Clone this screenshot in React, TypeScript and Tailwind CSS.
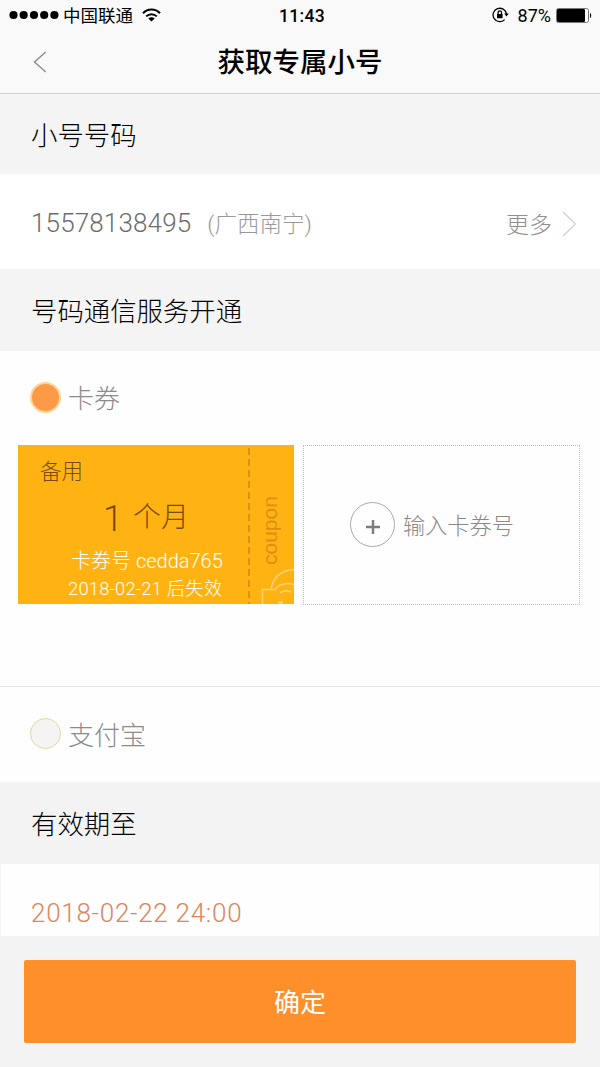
import React, { useState } from 'react';

type PayMethod = 'coupon' | 'alipay';

const coupon = {
  label: '备用',
  amount: '1',
  unit: '个月',
  code: 'cedda765',
  expires: '2018-02-21',
};

function StatusBar() {
  return (
    <div className="h-[30px] flex items-center justify-between pl-[9px] pr-[8px] text-black">
      <div className="w-[240px] flex items-center">
        <svg width="50" height="10" viewBox="0 0 50 10" fill="currentColor">
          {[4.5, 14.7, 25, 35.2, 45.4].map((cx) => (
            <circle key={cx} cx={cx} cy="5" r="4.1" />
          ))}
        </svg>
        <span className="ml-[4px] pt-[2px] text-[17.5px] leading-[30px]">中国联通</span>
        <svg className="ml-[9px]" width="19" height="14" viewBox="0 0 19 14" fill="none" stroke="currentColor" strokeWidth="2">
          <path d="M1 5.2C5.6.2 13.4.2 18 5.2" />
          <path d="M4.2 8.4c3-3 7.6-3 10.6 0" />
          <path d="M9.5 13.4 6.3 10.4c1.8-1.6 4.6-1.6 6.4 0z" fill="currentColor" stroke="none" />
        </svg>
      </div>
      <span className="pl-[3px] pt-[2px] font-['Roboto'] text-[17.5px] font-medium tracking-[0.3px]">11:43</span>
      <div className="w-[240px] flex items-center justify-end">
        <svg width="17" height="16" viewBox="0 0 17 16" fill="none" stroke="currentColor" strokeWidth="1.3">
          <path d="M12.6 12.6A6.7 6.7 0 1 1 14.4 7" />
          <path d="M12.2 6.6h4.6l-2.3 3z" fill="currentColor" stroke="none" />
          <rect x="5" y="7" width="5.6" height="4.2" fill="currentColor" stroke="none" />
          <path d="M6.1 7.2V5.6a1.7 1.7 0 0 1 3.4 0v1.6" />
        </svg>
        <span className="ml-[9px] font-['Roboto'] text-[18px]">87%</span>
        <svg className="ml-[5px]" width="36" height="15" viewBox="0 0 36 15">
          <rect x="0.5" y="0.5" width="32" height="14" rx="2" fill="#fff" stroke="#777" />
          <rect x="1" y="1" width="28" height="13" rx="1.2" fill="#000" />
          <path d="M34 5c1.6.6 1.6 4.4 0 5z" fill="#000" />
        </svg>
      </div>
    </div>
  );
}

function SectionTitle({ children }: { children: React.ReactNode }) {
  return (
    <h2 className="w-full h-full flex items-center pl-[31px] pt-[5px] text-[26.4px] font-light text-black">{children}</h2>
  );
}

function Radio({ checked }: { checked: boolean }) {
  return (
    <span
      className={`w-[31px] h-[31px] rounded-full shrink-0 ${
        checked ? 'bg-[#fd9a48] border-2 border-[#fbd59a]' : 'bg-[#f5f3f4] border border-[#e3da95]'
      }`}
    />
  );
}

export default function App() {
  const [method, setMethod] = useState<PayMethod>('coupon');

  return (
    <div className="w-[600px] h-[1067px] flex flex-col overflow-hidden bg-[#f4f3f4] font-['Roboto','Noto_Sans_CJK_SC',sans-serif]">
      {/* Top bar */}
      <header className="h-[94px] shrink-0 bg-[#f9f9f9] border-b border-[#cfcfcf]">
        <StatusBar />
        <div className="h-[63px] grid grid-cols-[60px_1fr_60px] items-center">
          <button className="pl-[33px] cursor-pointer">
            <svg width="14" height="22" viewBox="0 0 14 22" fill="none" stroke="#8b8b8b" strokeWidth="1.4">
              <path d="M12.7 1 1.5 11l11.2 10" />
            </svg>
          </button>
          <h1 className="pt-[3px] text-center text-[27.5px] leading-[40px] font-medium text-black">获取专属小号</h1>
        </div>
      </header>

      <div className="h-[80px] shrink-0 bg-[#f4f4f4]">
        <SectionTitle>小号号码</SectionTitle>
      </div>
      <div className="h-[95px] shrink-0 bg-white flex items-center pl-[31px] pr-[23px] pt-[4px]">
        <span className="text-[26px] font-light tracking-[0.15px] text-[#6c6c6c]">15578138495</span>
        <span className="ml-[16px] pt-[3px] text-[22.5px] font-light text-[#999]">(广西南宁)</span>
        <button className="ml-auto flex items-center text-[23px] font-light text-[#8f8f8f] cursor-pointer">
          <span className="pt-[5px]">更多</span>
          <svg className="ml-[10px]" width="15" height="26" viewBox="0 0 15 26" fill="none" stroke="#cfcfcf" strokeWidth="1.2">
            <path d="m1 1 12.5 12L1 25" />
          </svg>
        </button>
      </div>

      <div className="h-[82px] shrink-0 bg-[#f4f4f4]">
        <SectionTitle>号码通信服务开通</SectionTitle>
      </div>

      {/* Payment methods */}
      <div className="h-[336px] shrink-0 bg-[#fefefe] border-b border-[#e6e6e6]">
        <button onClick={() => setMethod('coupon')} className="h-[94px] pl-[30px] pb-[2px] flex items-center gap-[7px] cursor-pointer">
          <Radio checked={method === 'coupon'} />
          <span className="pt-[5px] text-[26px] font-light text-[#8b8b8b]">卡券</span>
        </button>
        <div className="flex gap-[9px] pl-[18px]">
          <div className="relative w-[276px] h-[159px] overflow-hidden bg-[#ffb313] flex">
            <div className="w-[230px] pt-[12px]">
              <p className="pl-[22px] text-[21.5px] leading-[30px] font-light text-[#7a4a0c]">{coupon.label}</p>
              <p className="mt-[13px] pl-[85px] flex items-center gap-[11px] leading-[34px] font-light text-[#7a4a0c]">
                <span className="w-[19px] pt-[2px] text-[36px]">{coupon.amount}</span>
                <span className="text-[28px]">{coupon.unit}</span>
              </p>
              <p className="mt-[11px] pl-[53px] text-[20px] leading-[28px] font-light text-white whitespace-nowrap">卡券号 {coupon.code}</p>
              <p className="pl-[50px] text-[18.3px] leading-[28px] font-light tracking-[0.25px] text-white whitespace-nowrap">{coupon.expires} 后失效</p>
            </div>
            <svg width="2" height="159" viewBox="0 0 2 159" stroke="#d08c16" strokeWidth="1.6">
              <path d="M1 3v156" strokeDasharray="7 4" />
            </svg>
            <div className="flex-1 pt-[48px]">
              <span className="block w-[40px] h-[72px] [writing-mode:vertical-rl] rotate-180 font-['Liberation_Sans'] text-[21px] leading-[40px] text-[#dc8f14]">coupon</span>
            </div>
            <svg className="absolute right-0 bottom-0" width="34" height="38" viewBox="0 0 34 38" fill="none" stroke="#ffd175" strokeWidth="1.6">
              <path d="M2.5 38V23.5h13M11 23C13 11 22 4 34 3.5M15.5 23.5c3-6 12-7 18.5-5M20 27c4-3 7-3 11-1" />
              <path d="M18 36.5h5" strokeWidth="2.5" />
            </svg>
          </div>
          <button className="w-[277px] h-[160px] border border-dotted border-[#c0c0c0] flex items-center pl-[46px] pb-[2px] cursor-pointer">
            <span className="w-[45px] h-[45px] rounded-full border border-[#aaa] flex items-center justify-center">
              <svg className="mt-[6px]" width="14" height="14" viewBox="0 0 14 14" stroke="#7c7c7c" strokeWidth="2.4">
                <path d="M7 0v14M0 7h14" />
              </svg>
            </span>
            <span className="ml-[8px] pt-[5px] text-[22.2px] font-light text-[#888]">输入卡券号</span>
          </button>
        </div>
      </div>
      <button onClick={() => setMethod('alipay')} className="h-[95px] shrink-0 bg-[#fefefe] pl-[30px] pb-[2px] flex items-center gap-[7px] cursor-pointer">
        <Radio checked={method === 'alipay'} />
        <span className="pt-[5px] text-[26px] font-light text-[#8b8b8b]">支付宝</span>
      </button>

      <div className="h-[82px] shrink-0">
        <SectionTitle>有效期至</SectionTitle>
      </div>
      <div className="h-[72px] shrink-0 mx-[1px] bg-[#fefefe] pl-[30px] pt-[30px] text-[26px] leading-[38px] font-light tracking-[0.72px] text-[#e0835a]">
        2018-02-22 24:00
      </div>

      {/* Bottom action */}
      <footer className="h-[131px] shrink-0 px-[24px] pt-[24px]">
        <button className="w-full h-[83px] rounded-[2px] bg-[#ff8f2b] pt-[4px] text-[26px] text-white cursor-pointer">确定</button>
      </footer>
    </div>
  );
}
